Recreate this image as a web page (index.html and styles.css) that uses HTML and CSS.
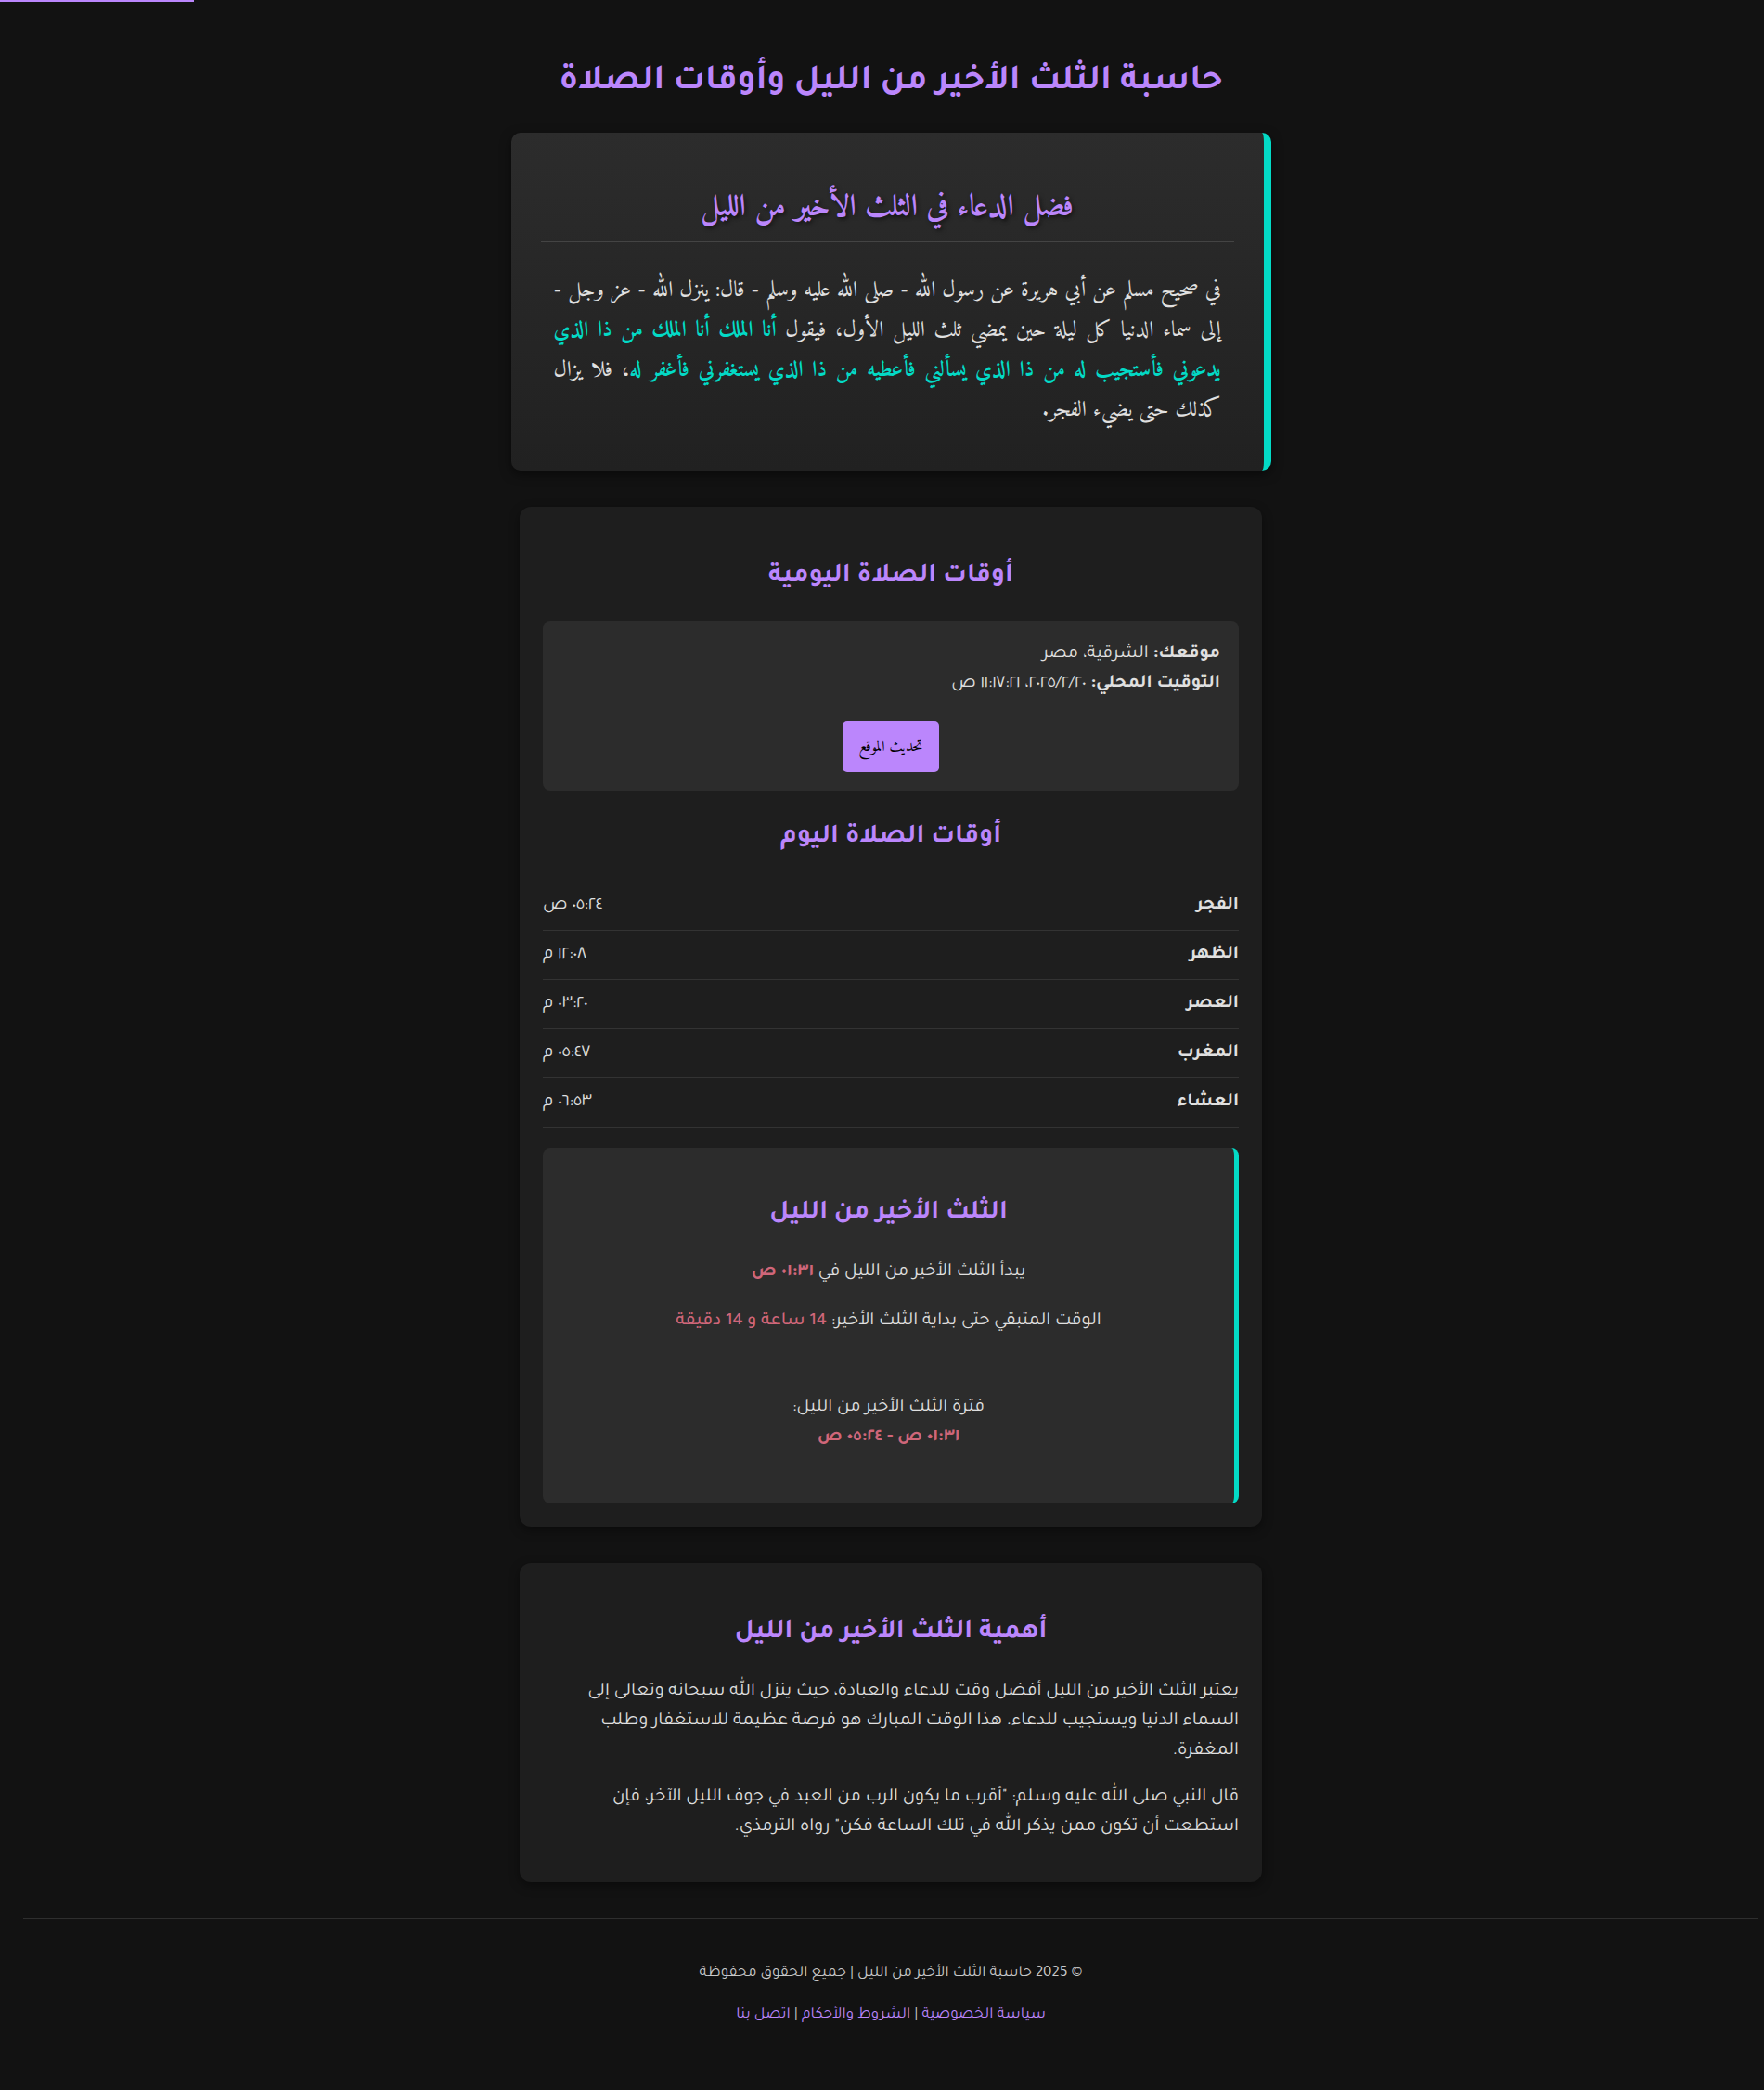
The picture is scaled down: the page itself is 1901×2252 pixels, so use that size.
FILE: index.html
```html
<!DOCTYPE html>
<html lang="ar" dir="rtl">
<head>
<meta charset="utf-8">
<title>حاسبة الثلث الأخير من الليل</title>
<link rel="stylesheet" href="styles.css">
</head>
<body>
<div class="progress"></div>
<div class="page">
  <header class="header">
    <h1 class="title">حاسبة الثلث الأخير من الليل وأوقات الصلاة</h1>
  </header>

  <main class="main">
    <section class="hadith-card">
      <h2 class="hadith-title">فضل الدعاء في الثلث الأخير من الليل</h2>
      <p class="hadith-text">في صحيح مسلم عن أبي هريرة عن رسول الله - صلى الله عليه وسلم - قال: ينزل الله - عز وجل - إلى سماء الدنيا كل ليلة حين يمضي ثلث الليل الأول، فيقول <span class="hadith-quote">أنا الملك أنا الملك من ذا الذي يدعوني فأستجيب له من ذا الذي يسألني فأعطيه من ذا الذي يستغفرني فأغفر له</span>، فلا يزال كذلك حتى يضيء الفجر.</p>
    </section>

    <section class="card">
      <h2 class="card-title">أوقات الصلاة اليومية</h2>
      <div class="location-box">
        <div class="loc-line"><strong>موقعك:</strong> الشرقية، مصر</div>
        <div class="loc-line"><strong>التوقيت المحلي:</strong> ٢٠‏/٢‏/٢٠٢٥، ١١:١٧:٢١ ص</div>
        <div class="btn-row"><button class="btn">تحديث الموقع</button></div>
      </div>

      <h2 class="card-title">أوقات الصلاة اليوم</h2>
      <div class="prayer-list">
        <div class="prayer-row"><span class="prayer-name">الفجر</span><span class="prayer-time">٠٥:٢٤ ص</span></div>
        <div class="prayer-row"><span class="prayer-name">الظهر</span><span class="prayer-time">١٢:٠٨ م</span></div>
        <div class="prayer-row"><span class="prayer-name">العصر</span><span class="prayer-time">٠٣:٢٠ م</span></div>
        <div class="prayer-row"><span class="prayer-name">المغرب</span><span class="prayer-time">٠٥:٤٧ م</span></div>
        <div class="prayer-row"><span class="prayer-name">العشاء</span><span class="prayer-time">٠٦:٥٣ م</span></div>
      </div>

      <div class="night-box">
        <h2 class="card-title">الثلث الأخير من الليل</h2>
        <p class="night-line">يبدأ الثلث الأخير من الليل في <span class="accent accent-strong">٠١:٣١ ص</span></p>
        <p class="night-line">الوقت المتبقي حتى بداية الثلث الأخير: <span class="accent">14 ساعة و 14 دقيقة</span></p>
        <div class="night-range">
          <div>فترة الثلث الأخير من الليل:</div>
          <div class="accent accent-strong">٠١:٣١ ص - ٠٥:٢٤ ص</div>
        </div>
      </div>
    </section>

    <section class="card">
      <h2 class="card-title">أهمية الثلث الأخير من الليل</h2>
      <p class="text">يعتبر الثلث الأخير من الليل أفضل وقت للدعاء والعبادة، حيث ينزل الله سبحانه وتعالى إلى السماء الدنيا ويستجيب للدعاء. هذا الوقت المبارك هو فرصة عظيمة للاستغفار وطلب المغفرة.</p>
      <p class="text">قال النبي صلى الله عليه وسلم: "أقرب ما يكون الرب من العبد في جوف الليل الآخر، فإن استطعت أن تكون ممن يذكر الله في تلك الساعة فكن" رواه الترمذي.</p>
    </section>
  </main>

  <footer class="footer">
    <p class="footer-line">© 2025 حاسبة الثلث الأخير من الليل | جميع الحقوق محفوظة</p>
    <p class="footer-line"><a href="#" class="footer-link">سياسة الخصوصية</a> | <a href="#" class="footer-link">الشروط والأحكام</a> | <a href="#" class="footer-link">اتصل بنا</a></p>
  </footer>
</div>
</body>
</html>
```

FILE: styles.css
```css
html {
  overflow-x: hidden;
  direction: ltr;
  background: #121212;
}
body {
  margin: 0;
  background: #121212;
  color: #e0e0e0;
  font-family: "Tajawal", "DejaVu Sans", sans-serif;
  font-size: 20px;
  line-height: 1.6;
}
.progress {
  position: fixed;
  top: 0;
  left: 0;
  width: 209px;
  height: 2px;
  background: #bb86fc;
  z-index: 10;
}
.page {
  width: 1920px;
  direction: rtl;
  padding: 0 25px;
  box-sizing: border-box;
}
.header {
  padding-top: 62px;
}
.title {
  margin: 0 0 25px;
  text-align: center;
  color: #bb86fc;
  font-size: 38.4px;
  line-height: 56px;
  font-weight: bold;
}
.main {
  display: flex;
  flex-direction: column;
  align-items: center;
  gap: 39px;
}
.hadith-card {
  width: 819px;
  box-sizing: border-box;
  padding: 30px 32px;
  background: linear-gradient(to bottom, #2c2c2c, #212121);
  border-right: 8px solid #03dac6;
  border-radius: 10px;
  box-shadow: 0 4px 12px rgba(0, 0, 0, 0.5);
}
.hadith-title {
  margin: 30px 0 0;
  padding-bottom: 15px;
  border-bottom: 1px solid #444;
  text-align: center;
  color: #bb86fc;
  font-family: "Amiri", serif;
  font-size: 33px;
  line-height: 42px;
  font-weight: bold;
  text-shadow: 2px 2px 4px rgba(0, 0, 0, 0.5);
}
.hadith-text {
  margin: 31px 0 13px;
  padding: 0 14px;
  text-align: justify;
  font-family: "Amiri", serif;
  font-size: 23.5px;
  line-height: 43px;
}
.hadith-quote {
  color: #03dac6;
  font-weight: bold;
}
.card {
  width: 800px;
  box-sizing: border-box;
  padding: 25px;
  background: #1e1e1e;
  border-radius: 12px;
  box-shadow: 0 4px 12px rgba(0, 0, 0, 0.4);
}
.card-title {
  margin: 30px 0 26px;
  text-align: center;
  color: #bb86fc;
  font-size: 28.8px;
  line-height: 42px;
  font-weight: bold;
}
.location-box {
  padding: 20px;
  background: #2c2c2c;
  border-radius: 8px;
}
.loc-line {
  line-height: 32px;
}
.btn-row {
  display: flex;
  justify-content: center;
  margin-top: 24px;
}
.btn {
  height: 55px;
  padding: 0 18px;
  border: none;
  border-radius: 5px;
  background: #bb86fc;
  color: #000;
  font-family: "Amiri", serif;
  font-size: 16.5px;
}
.prayer-list {
  display: flex;
  flex-direction: column;
}
.prayer-row {
  display: flex;
  justify-content: space-between;
  padding: 10px 0;
  border-bottom: 1px solid #333;
  line-height: 32px;
}
.prayer-name {
  font-weight: bold;
}
.night-box {
  margin-top: 22px;
  padding: 20px 20px 55px;
  background: #2c2c2c;
  border-right: 5px solid #03dac6;
  border-radius: 8px;
  text-align: center;
}
.night-line {
  margin: 21px 0 0;
  line-height: 32px;
}
.night-box .card-title + .night-line {
  margin-top: 0;
}
.night-range {
  margin-top: 61px;
  line-height: 32px;
}
.accent {
  color: #cf6679;
  font-weight: 500;
}
.accent-strong {
  font-weight: bold;
}
.text {
  margin: 18px 0;
  line-height: 32px;
}
.card-title + .text {
  margin-top: 0;
}
.footer {
  margin-top: 39px;
  border-top: 1px solid #2e2e2e;
  padding: 43px 0 45px;
  text-align: center;
}
.footer-line {
  margin: 0 0 13px;
  font-size: 17px;
  line-height: 32px;
  color: #c8c8c8;
}
.footer-link {
  color: #bb86fc;
}
```
